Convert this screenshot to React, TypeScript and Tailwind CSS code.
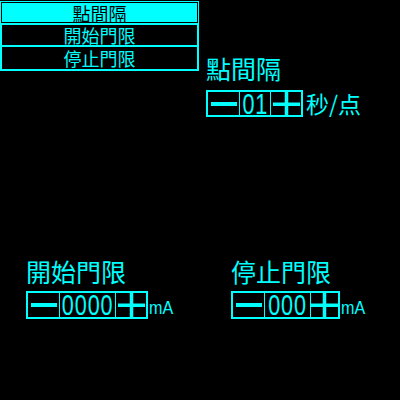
import React from "react";

const CJK = { fontFamily: '"Noto Sans CJK TC", "Noto Sans CJK SC", sans-serif' };

function Minus() {
  return (
    <svg width="26" height="6" viewBox="0 0 26 6" className="block">
      <rect x="0" y="1" width="26" height="4" fill="#00ffff" />
    </svg>
  );
}

function Plus() {
  return (
    <svg width="27" height="24" viewBox="0 0 27 24" className="block">
      <rect x="0" y="10.5" width="27" height="3.5" fill="#00ffff" />
      <rect x="11.75" y="0" width="3.5" height="24" fill="#00ffff" />
    </svg>
  );
}

function Stepper({
  value,
  unit,
  cells,
  h,
  unitCjk,
}: {
  value: string;
  unit: string;
  cells: [number, number, number];
  h: number;
  unitCjk?: boolean;
}) {
  return (
    <div className="flex items-center">
      <div className="flex border-2 border-[#00ffff]" style={{ height: h }}>
        <div className="flex items-center justify-center" style={{ width: cells[0] }}>
          <Minus />
        </div>
        <div
          className="flex items-center justify-center border-l border-[#00ffff] text-[#00ffff] text-[24px] leading-none"
          style={{ width: cells[1], fontFamily: '"Liberation Sans", sans-serif' }}
        >
          <span className="inline-block scale-x-[0.9] scale-y-[1.25] tracking-[1px] font-light">
            {value}
          </span>
        </div>
        <div
          className="flex items-center justify-center border-l border-[#00ffff]"
          style={{ width: cells[2] }}
        >
          <Plus />
        </div>
      </div>
      {unitCjk ? (
        <span className="ml-[3px] text-[23px] leading-none text-[#00ffff]" style={CJK}>
          {unit}
        </span>
      ) : (
        <span
          className="ml-[1px] mt-[4px] inline-block origin-left scale-x-[0.85] text-[19px] leading-none text-[#00ffff]"
          style={{ fontFamily: '"Liberation Sans", sans-serif' }}
        >
          {unit}
        </span>
      )}
    </div>
  );
}

export default function App() {
  return (
    <div className="w-[400px] h-[400px] bg-black overflow-hidden" style={CJK}>
      <div className="flex">
        <div className="w-[199px] pt-[1px] flex flex-col">
          <div className="h-[23px] border border-[#00ffff] p-px">
            <div className="h-full bg-[#00ffff] flex items-center justify-center text-black text-[18px] leading-[18px]">
              點間隔
            </div>
          </div>
          <div className="h-[23px] border-2 border-t border-[#00ffff] flex items-center justify-center text-[#00ffff] text-[18px] leading-[18px]">
            開始門限
          </div>
          <div className="h-[24px] border-2 border-t-0 border-[#00ffff] flex items-center justify-center text-[#00ffff] text-[18px] leading-[18px]">
            停止門限
          </div>
        </div>
        <div className="pl-[7px] pt-[56px] flex flex-col">
          <div className="text-[25px] leading-none text-[#00ffff]">點間隔</div>
          <div className="mt-[9px]">
            <Stepper value="01" unit="秒/点" cells={[31, 31, 31]} h={27} unitCjk />
          </div>
        </div>
      </div>
      <div className="flex mt-[142px] pl-[26px]">
        <div className="w-[205px] flex flex-col">
          <div className="text-[25px] leading-none text-[#00ffff]">開始門限</div>
          <div className="mt-[7px]">
            <Stepper value="0000" unit="mA" cells={[31, 56, 31]} h={28} />
          </div>
        </div>
        <div className="flex flex-col">
          <div className="text-[25px] leading-none text-[#00ffff]">停止門限</div>
          <div className="mt-[7px]">
            <Stepper value="000" unit="mA" cells={[31, 46, 28]} h={28} />
          </div>
        </div>
      </div>
    </div>
  );
}
